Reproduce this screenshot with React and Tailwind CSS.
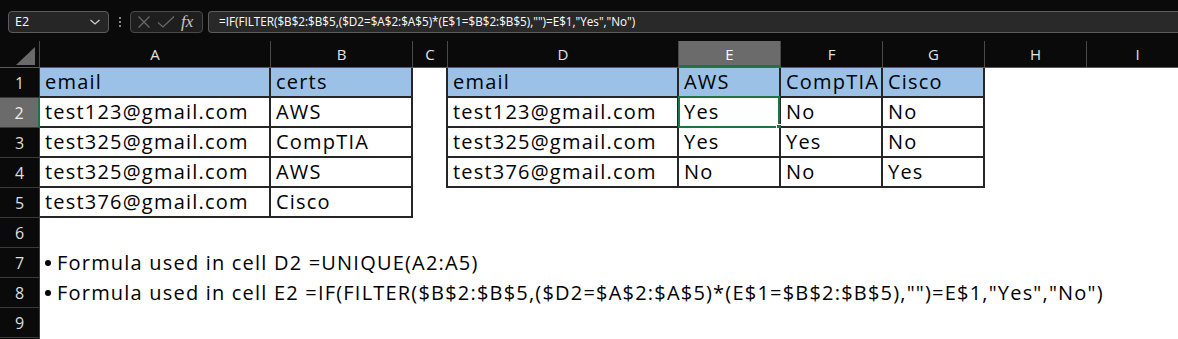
import React from "react";

const COLS = [
  { k: "A", w: "w-[231px]" },
  { k: "B", w: "w-[142px]" },
  { k: "C", w: "w-[35px]" },
  { k: "D", w: "w-[231px]" },
  { k: "E", w: "w-[102px]" },
  { k: "F", w: "w-[102px]" },
  { k: "G", w: "w-[102px]" },
  { k: "H", w: "w-[102px]" },
  { k: "I", w: "w-[102px]" },
];

const STY = {
  h: "bg-[#9bc2e6] border-r-2 border-b-2 border-[#262626]",
  d: "bg-white border-r-2 border-b-2 border-[#262626]",
  c: "bg-white border-r-2 border-[#262626]",
  n: "bg-white",
};

const GRID = [
  [["email", "h"], ["certs", "h"], ["", "c"], ["email", "h"], ["AWS", "h"], ["CompTIA", "h"], ["Cisco", "h"], ["", "n"], ["", "n"]],
  [["test123@gmail.com", "d"], ["AWS", "d"], ["", "c"], ["test123@gmail.com", "d"], ["Yes", "sel"], ["No", "d"], ["No", "d"], ["", "n"], ["", "n"]],
  [["test325@gmail.com", "d"], ["CompTIA", "d"], ["", "c"], ["test325@gmail.com", "d"], ["Yes", "d"], ["Yes", "d"], ["No", "d"], ["", "n"], ["", "n"]],
  [["test325@gmail.com", "d"], ["AWS", "d"], ["", "c"], ["test376@gmail.com", "d"], ["No", "d"], ["No", "d"], ["Yes", "d"], ["", "n"], ["", "n"]],
  [["test376@gmail.com", "d"], ["Cisco", "d"], ["", "n"], ["", "n"], ["", "n"], ["", "n"], ["", "n"], ["", "n"], ["", "n"]],
];

const FORMULA = '=IF(FILTER($B$2:$B$5,($D2=$A$2:$A$5)*(E$1=$B$2:$B$5),"")=E$1,"Yes","No")';

function RowHead({ n, selected }) {
  return (
    <div
      className={
        "w-[40px] h-[30px] shrink-0 flex items-center justify-center text-[16px] border-b border-[#3a3a3a] " +
        (selected
          ? "bg-[#6b6b6b] text-[#f0f0f0] border-r-2 border-r-[#217346]"
          : "bg-[#0a0a0a] text-[#dedede] border-r border-r-[#3c3c3c]")
      }
    >
      {n}
    </div>
  );
}

function Cell({ col, text, s }) {
  const isSel = s === "sel";
  const cls = isSel ? STY.d : STY[s];
  return (
    <div
      className={
        col.w +
        " h-[30px] shrink-0 relative pl-[5px] leading-[28px] text-[20px] tracking-[0.06em] text-black whitespace-nowrap " +
        cls
      }
    >
      {text}
      {isSel && (
        <>
          <div className="absolute -left-[1px] -top-[2px] w-[102px] h-[32px] border-2 border-[#217346]" />
          <div className="absolute -right-[3px] -bottom-[4px] w-[6px] h-[6px] bg-[#217346] border border-white" />
        </>
      )}
    </div>
  );
}

function Note({ children }) {
  return (
    <div className="flex-1 flex items-center h-[30px]">
      <div className="ml-[5px] w-[6px] h-[6px] shrink-0 rounded-full bg-black" />
      <span className="ml-[6px] leading-[30px] text-[20px] tracking-[0.06em] text-black whitespace-nowrap">
        {children}
      </span>
    </div>
  );
}

export default function App() {
  return (
    <div className="w-[1178px] h-[339px] overflow-hidden bg-white font-['Open_Sans',sans-serif]">
      {/* toolbar */}
      <div className="h-[41px] bg-[#0a0a0a] flex items-start pt-[11px]">
        <div className="ml-[8px] w-[101px] h-[22px] shrink-0 rounded-[4px] border border-[#5c5c5c] bg-[#262626] flex items-center justify-between pl-[6px] pr-[6px]">
          <span className="text-[12.5px] text-white leading-none">E2</span>
          <svg width="12" height="8" viewBox="0 0 12 8" className="mr-[1px]">
            <path d="M1.5 2 L6 6 L10.5 2" fill="none" stroke="#cfcfcf" strokeWidth="1.3" />
          </svg>
        </div>
        <div className="w-[21px] h-[22px] shrink-0 flex flex-col items-center justify-center gap-[2px]">
          <div className="w-[2px] h-[2px] bg-[#b0b0b0] rounded-full" />
          <div className="w-[2px] h-[2px] bg-[#b0b0b0] rounded-full" />
          <div className="w-[2px] h-[2px] bg-[#b0b0b0] rounded-full" />
        </div>
        <div className="w-[73px] h-[22px] shrink-0 rounded-[4px] border border-[#4a4a4a] bg-[#1e1e1e] flex items-center pl-[6px] gap-[6px]">
          <svg width="14" height="14" viewBox="0 0 14 14">
            <path d="M1.5 1.5 L12.5 12.5 M12.5 1.5 L1.5 12.5" stroke="#6b6b6b" strokeWidth="1.2" />
          </svg>
          <svg width="18" height="14" viewBox="0 0 18 14">
            <path d="M1 7.5 L6 12 L17 1.5" fill="none" stroke="#6b6b6b" strokeWidth="1.2" />
          </svg>
          <span className="font-['Liberation_Serif',serif] italic text-[17px] text-[#c8c8c8] leading-none -mt-[2px]">fx</span>
        </div>
        <div className="ml-[5px] flex-1 h-[22px] rounded-l-[4px] border border-r-0 border-[#5c5c5c] bg-[#292929] flex items-center pl-[10px]">
          <span className="text-[11.7px] text-white whitespace-nowrap">{FORMULA}</span>
        </div>
      </div>

      {/* column header */}
      <div className="h-[27px] flex bg-[#0a0a0a] border-b border-[#5a5a5a]">
        <div className="w-[40px] h-[26px] shrink-0 border-r border-[#4a4a4a] flex items-end justify-end pr-[4px] pb-[2px]">
          <svg width="19" height="18" viewBox="0 0 19 18">
            <path d="M19 0 L19 18 L0 18 Z" fill="#6a6a6a" />
          </svg>
        </div>
        {COLS.map((c) => (
          <div
            key={c.k}
            className={
              c.w +
              " h-[26px] shrink-0 flex items-center justify-center text-[15px] border-r border-[#4a4a4a] " +
              (c.k === "E"
                ? "bg-[#6b6b6b] text-white shadow-[inset_0_-2px_0_#217346]"
                : "text-[#e2e2e2]")
            }
          >
            {c.k}
          </div>
        ))}
      </div>

      {/* body */}
      {GRID.map((row, i) => (
        <div key={i} className="flex h-[30px]">
          <RowHead n={i + 1} selected={i === 1} />
          {row.map(([t, s], j) => (
            <Cell key={j} col={COLS[j]} text={t} s={s} />
          ))}
        </div>
      ))}
      <div className="flex h-[30px]">
        <RowHead n={6} />
        <div className="flex-1" />
      </div>
      <div className="flex h-[30px]">
        <RowHead n={7} />
        <Note>Formula used in cell D2 =UNIQUE(A2:A5)</Note>
      </div>
      <div className="flex h-[30px]">
        <RowHead n={8} />
        <Note>Formula used in cell E2 {FORMULA}</Note>
      </div>
      <div className="flex h-[30px]">
        <RowHead n={9} />
        <div className="flex-1" />
      </div>
      <div className="flex h-[30px]">
        <RowHead n="" />
        <div className="flex-1" />
      </div>
    </div>
  );
}
